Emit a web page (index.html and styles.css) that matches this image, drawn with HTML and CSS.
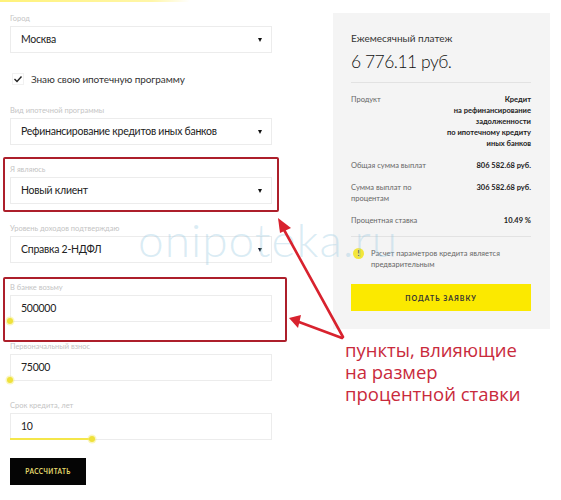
FILE: index.html
```html
<!DOCTYPE html>
<html lang="ru">
<head>
  <meta charset="UTF-8">
  <meta name="viewport" content="width=device-width, initial-scale=1.0">
  <title>Ипотечный калькулятор</title>
  <link rel="stylesheet" href="styles.css">
</head>
<body>
  <div class="topline"></div>

  <div class="page">
    <!-- Форма -->
    <form class="calc">
      <div class="field">
        <div class="label">Город</div>
        <div class="select">Москва</div>
      </div>

      <label class="check">
        <span class="box">
          <svg width="10" height="10" viewBox="0 0 10 10"><path d="M1.5 5 L4 7.5 L8.5 2.5" fill="none" stroke="#222" stroke-width="1.4"/></svg>
        </span>
        Знаю свою ипотечную программу
      </label>

      <div class="field">
        <div class="label">Вид ипотечной программы</div>
        <div class="select">Рефинансирование кредитов иных банков</div>
      </div>

      <div class="field marked">
        <div class="label">Я являюсь</div>
        <div class="select">Новый клиент</div>
      </div>

      <div class="field">
        <div class="label">Уровень доходов подтверждаю</div>
        <div class="select">Справка 2-НДФЛ</div>
      </div>

      <div class="field marked wide">
        <div class="label">В банке возьму</div>
        <div class="input">500000</div>
        <div class="range"><span class="fill" style="width: 0px"></span><span class="dot" style="left: 0px"></span></div>
      </div>

      <div class="field">
        <div class="label">Первоначальный взнос</div>
        <div class="input">75000</div>
        <div class="range"><span class="fill" style="width: 0px"></span><span class="dot" style="left: 0px"></span></div>
      </div>

      <div class="field last">
        <div class="label">Срок кредита, лет</div>
        <div class="input">10</div>
        <div class="range"><span class="fill" style="width: 82px"></span><span class="dot" style="left: 82px"></span></div>
      </div>

      <button type="button" class="btn-calc">РАССЧИТАТЬ</button>
    </form>

    <!-- Результат -->
    <aside class="side">
      <div class="result">
        <div class="result-title">Ежемесячный платеж</div>
        <div class="result-sum">6 776.11 руб.</div>

        <div class="rows">
          <div class="row">
            <div class="row-name">Продукт</div>
            <div class="row-value">Кредит<br>на рефинансирование<br>задолженности<br>по ипотечному кредиту<br>иных банков</div>
          </div>
          <div class="row">
            <div class="row-name">Общая сумма выплат</div>
            <div class="row-value">806 582.68 руб.</div>
          </div>
          <div class="row">
            <div class="row-name">Сумма выплат по процентам</div>
            <div class="row-value">306 582.68 руб.</div>
          </div>
          <div class="row">
            <div class="row-name">Процентная ставка</div>
            <div class="row-value">10.49 %</div>
          </div>
        </div>

        <div class="notice">
          <span class="notice-icon">!</span>
          <span>Расчет параметров кредита является<br>предварительным</span>
        </div>

        <button type="button" class="btn-apply">ПОДАТЬ ЗАЯВКУ</button>
      </div>

      <p class="note">пункты, влияющие<br>на размер<br>процентной ставки</p>
    </aside>
  </div>

  <div class="watermark">onipoteka.ru</div>

  <!-- Стрелки -->
  <svg class="arrows" width="561" height="500" viewBox="0 0 561 500">
    <g stroke="#d8222e" stroke-width="2.6" stroke-linecap="round" fill="none">
      <line x1="343" y1="337" x2="283" y2="228"/>
      <line x1="342" y1="338" x2="299" y2="322"/>
    </g>
    <g fill="#d8222e">
      <polygon points="278,218 291,228 280,233"/>
      <polygon points="289,318 301,315 298,328"/>
    </g>
  </svg>
</body>
</html>
```

FILE: styles.css
```css
/* Общие стили */
body {
  margin: 0;
  width: 561px;
  height: 500px;
  overflow: hidden;
  background: #fff;
  font-family: 'Lato', 'Noto Sans', sans-serif;
  color: #222;
  position: relative;
}

.topline {
  height: 2px;
  width: 190px;
  background: linear-gradient(90deg, #fff27a 0%, #fff6a8 80%, rgba(255, 246, 168, 0) 100%);
}

.page {
  display: flex;
  padding-left: 10px;
}

/* Форма */
.calc {
  width: 262px;
  padding-top: 12px;
}

.field {
  position: relative;
  margin-bottom: 20px;
}

.field.last {
  margin-bottom: 18px;
}

.label {
  font-size: 7.5px;
  line-height: 10px;
  height: 10px;
  margin-bottom: 2px;
  color: #c4c4c4;
}

.select,
.input {
  position: relative;
  box-sizing: border-box;
  height: 27px;
  border: 1px solid #ececec;
  padding: 0 10px;
  font-size: 10.5px;
  letter-spacing: -0.25px;
  line-height: 25px;
  color: #222;
  background: #fff;
}

.select::after {
  content: "";
  position: absolute;
  right: 9px;
  top: 11px;
  border-top: 4px solid #111;
  border-left: 2.5px solid transparent;
  border-right: 2.5px solid transparent;
}

.check {
  display: flex;
  align-items: center;
  gap: 7px;
  height: 12px;
  margin: 19px 0 21px 2px;
  font-size: 10px;
  letter-spacing: -0.1px;
  color: #333;
}

.check .box {
  width: 12px;
  height: 12px;
  border: 1px solid #f1f1f1;
  display: flex;
  align-items: center;
  justify-content: center;
  box-sizing: border-box;
}

/* Ползунки */
.range {
  position: relative;
  height: 0;
}

.range .fill {
  position: absolute;
  left: 0;
  top: -2px;
  height: 2px;
  background: #f4e64a;
}

.range .dot {
  position: absolute;
  top: -4px;
  width: 6px;
  height: 6px;
  margin-left: -3px;
  border-radius: 50%;
  background: #efe13a;
  box-shadow: 0 0 0 1.5px rgba(245, 235, 110, 0.45);
}

/* Красные рамки */
.marked::before {
  content: "";
  position: absolute;
  top: -8px;
  bottom: -8px;
  left: -7px;
  right: -7px;
  border: 2px solid #ad1f2b;
  border-radius: 2px;
}

.marked.wide::before {
  top: -6px;
  bottom: -20px;
  right: -15px;
}

.btn-calc {
  display: block;
  width: 76px;
  height: 27px;
  border: none;
  background: #050505;
  color: #e4da6c;
  font-family: 'Lato', sans-serif;
  font-size: 6.5px;
  font-weight: bold;
  letter-spacing: 0.4px;
  padding: 0;
}

/* Блок результата */
.side {
  width: 217px;
  margin-left: 61px;
  margin-top: 11px;
}

.result {
  background: #f4f4f4;
  padding: 18px 19px 18px 18px;
}

.result-title {
  font-size: 10px;
  line-height: 14px;
  color: #333;
}

.result-sum {
  font-size: 17.5px;
  font-weight: 300;
  line-height: 24px;
  letter-spacing: -0.5px;
  margin: 5px 0 8px;
  color: #111;
}

.rows {
  border-top: 1px solid #e2e2e2;
  border-bottom: 1px solid #e2e2e2;
  padding: 11px 0 10px;
  display: flex;
  flex-direction: column;
  gap: 11px;
}

.row {
  display: flex;
  justify-content: space-between;
  font-size: 7.5px;
  line-height: 11px;
}

.row-name {
  width: 82px;
  color: #666;
}

.row-value {
  text-align: right;
  font-weight: bold;
  color: #222;
}

.notice {
  display: flex;
  align-items: flex-start;
  gap: 7px;
  margin: 11px 0 14px 2px;
  font-size: 7.5px;
  line-height: 11px;
  color: #666;
}

.notice-icon {
  flex: none;
  width: 11px;
  height: 11px;
  border-radius: 50%;
  background: #f3e63a;
  color: #333;
  font-weight: bold;
  font-size: 7px;
  text-align: center;
  line-height: 11px;
}

.btn-apply {
  display: block;
  width: 100%;
  height: 27px;
  border: none;
  background: #fbe900;
  color: #333;
  font-family: 'Lato', sans-serif;
  font-size: 7px;
  font-weight: bold;
  letter-spacing: 1px;
  padding: 0;
}

.note {
  margin: 10px 0 0 12px;
  font-family: 'Open Sans', sans-serif;
  font-size: 18.5px;
  line-height: 22px;
  color: #c92a3c;
  white-space: nowrap;
}

/* Водяной знак и стрелки */
.watermark {
  position: absolute;
  left: 138px;
  top: 217px;
  font-size: 46px;
  line-height: 46px;
  font-weight: 300;
  letter-spacing: 1px;
  color: rgba(150, 200, 225, 0.35);
  pointer-events: none;
}

.arrows {
  position: absolute;
  left: 0;
  top: 0;
  pointer-events: none;
}
```
